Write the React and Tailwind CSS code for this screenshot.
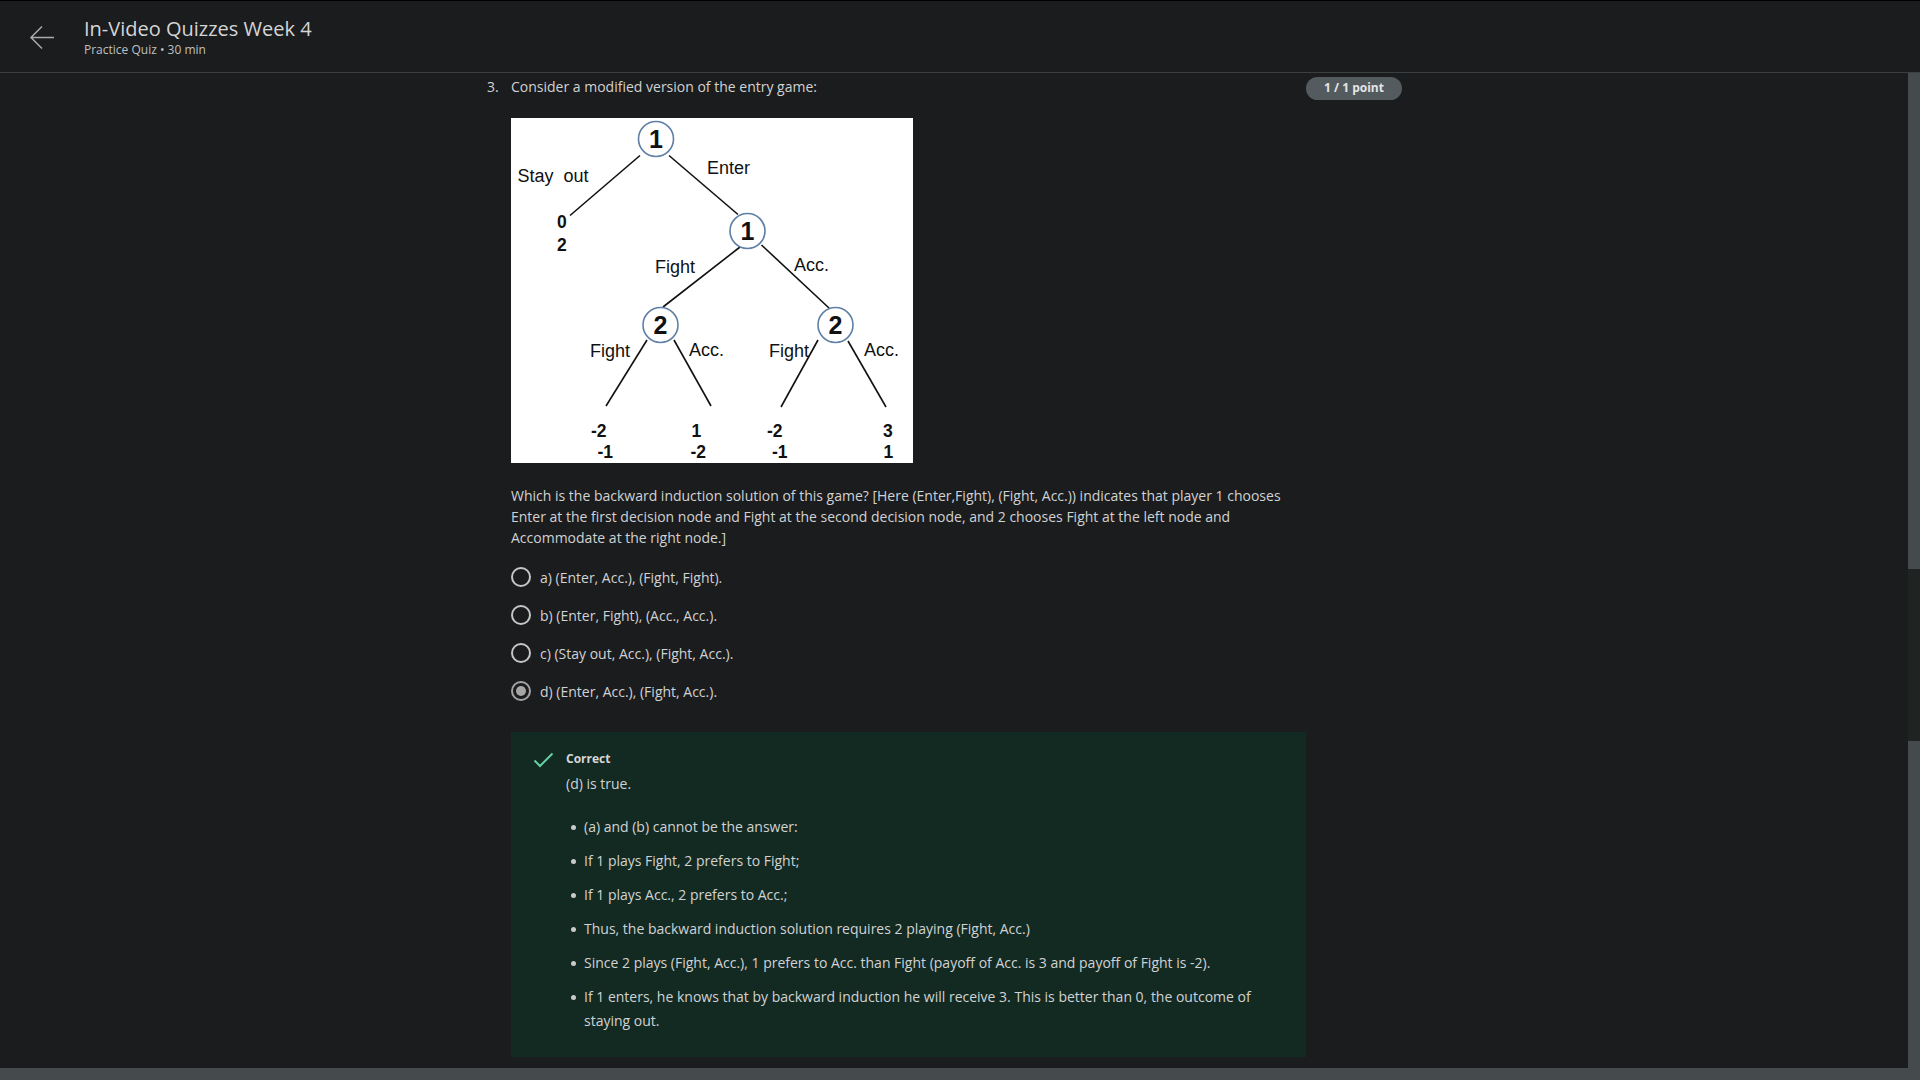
import React from 'react';

const options = [
  { id: 'a', label: 'a) (Enter, Acc.), (Fight, Fight).' },
  { id: 'b', label: 'b) (Enter, Fight), (Acc., Acc.).' },
  { id: 'c', label: 'c) (Stay out, Acc.), (Fight, Acc.).' },
  { id: 'd', label: 'd) (Enter, Acc.), (Fight, Acc.).', selected: true },
];

const explanation = [
  '(a) and (b) cannot be the answer:',
  'If 1 plays Fight, 2 prefers to Fight;',
  'If 1 plays Acc., 2 prefers to Acc.;',
  'Thus, the backward induction solution requires 2 playing (Fight, Acc.)',
  'Since 2 plays (Fight, Acc.), 1 prefers to Acc. than Fight (payoff of Acc. is 3 and payoff of Fight is -2).',
  'If 1 enters, he knows that by backward induction he will receive 3. This is better than 0, the outcome of staying out.',
];

function GameTree() {
  const nodes = [
    { x: 145, y: 21, n: '1' },
    { x: 236.5, y: 113, n: '1' },
    { x: 149.5, y: 207, n: '2' },
    { x: 324.5, y: 207, n: '2' },
  ];
  const lines = [
    [129, 37.5, 59, 97.5],
    [158, 37.5, 227, 96.5],
    [229, 129, 152, 189],
    [250.5, 127, 318, 190],
    [136, 222, 95, 288],
    [163, 222, 200, 288],
    [307, 222, 270, 289],
    [337, 223, 375, 289],
  ];
  const labels = [
    { x: 6.5, y: 64, t: 'Stay  out' },
    { x: 196, y: 55.5, t: 'Enter' },
    { x: 144, y: 154.5, t: 'Fight' },
    { x: 283, y: 152.5, t: 'Acc.' },
    { x: 79, y: 238.5, t: 'Fight' },
    { x: 178, y: 237.5, t: 'Acc.' },
    { x: 258, y: 238.5, t: 'Fight' },
    { x: 353, y: 237.5, t: 'Acc.' },
  ];
  const payoffs = [
    { x: 46, y: 110, t: '0' },
    { x: 46, y: 132.5, t: '2' },
    { x: 80, y: 318.5, t: '-2' },
    { x: 86.5, y: 340, t: '-1' },
    { x: 180.5, y: 318.5, t: '1' },
    { x: 179.5, y: 340, t: '-2' },
    { x: 256, y: 318.5, t: '-2' },
    { x: 261, y: 340, t: '-1' },
    { x: 372, y: 318.5, t: '3' },
    { x: 372.5, y: 340, t: '1' },
  ];
  return (
    <svg width="402" height="345" viewBox="0 0 402 345" className="block bg-white">
      {lines.map(([x1, y1, x2, y2], i) => (
        <line key={i} x1={x1} y1={y1} x2={x2} y2={y2} stroke="#111" strokeWidth="1.6" />
      ))}
      {nodes.map((n, i) => (
        <g key={i}>
          <circle cx={n.x} cy={n.y} r="17.5" fill="#fff" stroke="#5f7fa6" strokeWidth="1.6" />
          <text
            x={n.x}
            y={n.y + 9}
            textAnchor="middle"
            fontFamily="'Liberation Sans', Arial, sans-serif"
            fontWeight="700"
            fontSize="25"
            fill="#111"
          >
            {n.n}
          </text>
        </g>
      ))}
      {labels.map((l, i) => (
        <text
          key={i}
          x={l.x}
          y={l.y}
          fontFamily="'Liberation Sans', Arial, sans-serif"
          fontSize="18"
          fill="#111"
          style={{ whiteSpace: 'pre' }}
        >
          {l.t}
        </text>
      ))}
      {payoffs.map((p, i) => (
        <text
          key={i}
          x={p.x}
          y={p.y}
          fontFamily="'Liberation Sans', Arial, sans-serif"
          fontWeight="700"
          fontSize="17.5"
          fill="#111"
        >
          {p.t}
        </text>
      ))}
    </svg>
  );
}

function Radio({ selected }) {
  return (
    <span
      className={`flex h-[20px] w-[20px] shrink-0 items-center justify-center rounded-full border-2 ${
        selected ? 'border-[#a3a3a3]' : 'border-[#c6c6c6]'
      }`}
    >
      {selected && <span className="h-[10px] w-[10px] rounded-full bg-[#a6a6a6]" />}
    </span>
  );
}

export default function App() {
  return (
    <div className="flex h-[1080px] w-[1920px] flex-col overflow-hidden bg-[#1b1c1e] font-['Open_Sans',sans-serif] text-[#d1d2d3]">
      <header className="flex h-[73px] shrink-0 items-start border-t border-b border-t-black border-b-[#3c3f42] pt-[15px]">
        <button className="ml-[29px] mt-[10px] text-[#a9abad]">
          <svg width="26" height="24" viewBox="0 0 26 24" fill="none" stroke="currentColor" strokeWidth="1.5">
            <path d="M25 11.5H2M13 0.5L2 11.5L13 22.5" />
          </svg>
        </button>
        <div className="ml-[29px]">
          <h1 className="text-[20px] leading-[26px] text-[#d4d5d6]">In-Video Quizzes Week 4</h1>
          <p className="text-[12px] leading-[16px] text-[#bfc0c1]">Practice Quiz • 30 min</p>
        </div>
      </header>

      <div className="flex min-h-0 flex-1">
        <main className="flex-1 overflow-hidden">
          <div className="flex pl-[487px] pt-[3px]">
            <div className="w-[24px] text-[14px] leading-[21px]">3.</div>
            <div className="w-[795px]">
              <p className="text-[14px] leading-[21px]">Consider a modified version of the entry game:</p>
              <div className="mt-[21px]">
                <GameTree />
              </div>
              <p className="mt-[22px] text-[14px] leading-[21px]">
                Which is the backward induction solution of this game? [Here (Enter,Fight), (Fight, Acc.)) indicates that
                player 1 chooses Enter at the first decision node and Fight at the second decision node, and 2 chooses Fight
                at the left node and Accommodate at the right node.]
              </p>
              <div className="mt-[10px] flex flex-col">
                {options.map((o) => (
                  <label key={o.id} className="flex h-[38px] items-center">
                    <Radio selected={o.selected} />
                    <span className="ml-[9px] text-[14px] leading-[21px]">{o.label}</span>
                  </label>
                ))}
              </div>
              <div className="mt-[22px] flex bg-[#132a23] pb-[24px] pl-[22px] pr-[30px] pt-[18px]">
                <svg width="21" height="16" viewBox="0 0 21 16" fill="none" className="mt-[2px] shrink-0">
                  <path d="M1.5 8.5L7 14L19.5 1.5" stroke="#62d1a2" strokeWidth="2" />
                </svg>
                <div className="ml-[12px] flex-1">
                  <div className="text-[12px] font-bold leading-[18px] text-[#d6d7d7]">Correct</div>
                  <p className="mt-[5px] text-[14px] leading-[21px]">(d) is true.</p>
                  <ul className="mt-[21px] flex flex-col gap-[10px]">
                    {explanation.map((t, i) => (
                      <li key={i} className="flex">
                        <span className="ml-[5px] mr-[8px] mt-[9.5px] h-[5px] w-[5px] shrink-0 rounded-full bg-[#c9caca]" />
                        <span className="text-[14px] leading-[24px]">{t}</span>
                      </li>
                    ))}
                  </ul>
                </div>
              </div>
            </div>
            <div className="-mt-[2px]">
              <span className="inline-flex h-[23px] w-[96px] items-center justify-center rounded-full bg-[#545b5e] text-[12px] font-bold text-[#e4e5e6]">
                1 / 1 point
              </span>
            </div>
          </div>
        </main>
        <div className="flex w-[12px] shrink-0 flex-col bg-[#454b4d]">
          <div className="h-[496px]" />
          <div className="h-[172px] bg-[#1f2322]" />
        </div>
      </div>
      <div className="h-[12px] shrink-0 bg-[#454b4d]" />
    </div>
  );
}
